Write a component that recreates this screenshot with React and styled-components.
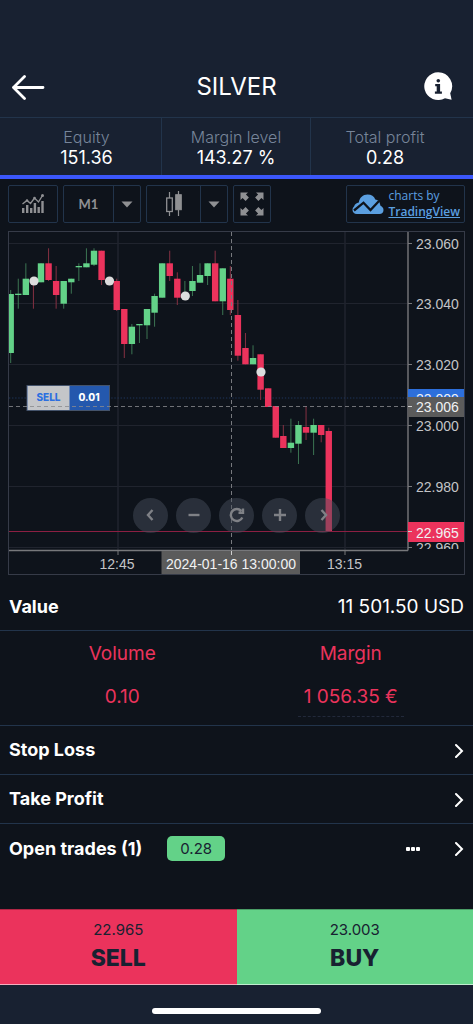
import React from "react";
import styled, { createGlobalStyle } from "styled-components";

const color = {
  page: "#0e131b",
  bar: "#182131",
  line: "#22344b",
  accent: "#3b57fb",
  up: "#63d288",
  down: "#eb335c",
  upWick: "#3c7553",
  downWick: "#863143",
  text: "#ffffff",
  muted: "#77859a",
  tool: "#8f9093",
  link: "#5b9fe0",
};

const GlobalStyle = createGlobalStyle`
  *, *::before, *::after { box-sizing: border-box; }
  body {
    margin: 0;
    background: ${color.page};
    color: ${color.text};
    font-family: Inter, "Liberation Sans", sans-serif;
  }
  button {
    margin: 0;
    padding: 0;
    border: 0;
    background: none;
    color: inherit;
    font: inherit;
    cursor: pointer;
  }
  svg { display: block; }
`;

const Page = styled.div`
  display: flex;
  flex-direction: column;
  min-height: 100vh;
`;

const Header = styled.header`
  display: grid;
  grid-template-columns: 1fr auto 1fr;
  align-items: center;
  padding: 56px 11px 0;
  height: 118px;
  background: ${color.bar};
  border-bottom: 1px solid ${color.line};
`;

const Title = styled.h1`
  margin: 0;
  font-size: 24px;
  line-height: 28px;
  font-weight: 400;
`;

const IconButton = styled.button`
  display: flex;
`;

const InfoButton = styled(IconButton)`
  justify-self: end;
  padding-right: 9px;
`;

const Stats = styled.dl`
  display: grid;
  grid-template-columns: repeat(3, 1fr);
  margin: 0;
  padding: 0 14px 0 12px;
  background: ${color.bar};
  border-bottom: 4px solid ${color.accent};
`;

const Stat = styled.div`
  display: flex;
  flex-direction: column;
  align-items: center;
  height: 57px;
  padding-top: 9px;
  & + & { border-left: 1px solid ${color.line}; }
`;

const StatLabel = styled.dt`
  font-size: 16px;
  line-height: 20px;
  font-weight: 300;
  color: ${color.muted};
`;

const StatValue = styled.dd`
  margin: 0;
  font-size: 18px;
  line-height: 22px;
`;

const Toolbar = styled.div`
  display: flex;
  gap: 5px;
  padding: 6px 8px 8px;
`;

const ToolGroup = styled.div`
  display: flex;
  height: 38px;
  border: 1px solid ${color.line};
  border-radius: 2px;
`;

const ToolButton = styled.button`
  display: flex;
  align-items: center;
  justify-content: center;
  width: ${(p) => p.$width}px;
  color: ${color.tool};
  font-family: Lato, sans-serif;
  font-size: 13px;
  font-weight: 700;
  & + & { border-left: 1px solid ${color.line}; }
`;

const Attribution = styled.a`
  display: flex;
  align-items: center;
  gap: 4px;
  height: 38px;
  margin-left: auto;
  padding: 0 4px 0 5px;
  border: 1px solid ${color.line};
  border-radius: 2px;
  color: ${color.link};
  font-family: "Open Sans", sans-serif;
  font-size: 12px;
  line-height: 16px;
  text-decoration: none;
`;

const AttributionText = styled.span`
  display: flex;
  flex-direction: column;
  strong {
    font-weight: 600;
    text-decoration: underline;
  }
`;

const ChartFrame = styled.section`
  position: relative;
  margin: 0 8px;
  border: 1px solid #363b48;
`;

const ChartSvg = styled.svg`
  width: 100%;
  height: auto;
  font-family: "Liberation Sans", Arial, sans-serif;
  font-size: 14px;
`;

const ChartNav = styled.div`
  position: absolute;
  left: 0;
  right: 0;
  bottom: 12%;
  display: flex;
  justify-content: center;
  gap: 8px;
`;

const NavButton = styled.button`
  display: flex;
  align-items: center;
  justify-content: center;
  width: 35px;
  height: 35px;
  border-radius: 50%;
  background: rgba(71, 79, 91, 0.48);
  color: #7f8186;
`;

const Row = styled.div`
  display: flex;
  align-items: center;
  min-height: 49px;
  padding: 0 9px;
  border-bottom: ${(p) => (p.$last ? "0" : `1px solid ${color.line}`)};
  font-size: 18px;
  line-height: 22px;
`;

const ValueRow = styled(Row)`
  min-height: 56px;
  padding-top: 8px;
`;

const RowLabel = styled.span`
  font-weight: 700;
`;

const RowValue = styled.span`
  margin-left: auto;
  font-size: 19px;
  font-weight: 400;
`;

const RowLink = styled.button`
  display: flex;
  flex: 1;
  align-items: center;
  justify-content: space-between;
  min-height: 48px;
  text-align: left;
`;

const Badge = styled.span`
  margin-left: 25px;
  padding: 0 13px;
  border-radius: 5px;
  background: ${color.up};
  color: ${color.bar};
  font-size: 15px;
  line-height: 25px;
`;

const RowActions = styled.div`
  display: flex;
  align-items: center;
  gap: 34px;
  margin-left: auto;
`;

const Amounts = styled.dl`
  display: grid;
  grid-template-columns: 1fr 1fr;
  margin: 0;
  padding: 0 8px;
  height: 95px;
  border-bottom: 1px solid ${color.line};
  color: ${color.down};
  font-size: 19px;
  line-height: 22px;
`;

const Amount = styled.div`
  display: flex;
  flex-direction: column;
  align-items: center;
  gap: 17px;
  padding-top: 12px;
`;

const AmountValue = styled.dd`
  margin: 0;
  padding: 4px 6px 8px;
  border-bottom: 1px dashed ${(p) => (p.$underlined ? "#22293a" : "transparent")};
`;

const OrderBar = styled.div`
  display: grid;
  grid-template-columns: 1fr 1fr;
  margin-top: auto;
`;

const OrderButton = styled.button`
  display: flex;
  flex-direction: column;
  align-items: center;
  height: 76px;
  padding-top: 10px;
  background: ${(p) => p.$fill};
  border-top: 1px solid rgba(0, 0, 0, 0.25);
  border-bottom: 1px solid rgba(255, 255, 255, 0.6);
  color: ${color.bar};
`;

const OrderPrice = styled.span`
  font-size: 15px;
  line-height: 20px;
`;

const OrderSide = styled.span`
  margin-top: 4px;
  font-size: 23px;
  line-height: 28px;
  font-weight: 800;
`;

const HomeArea = styled.footer`
  display: flex;
  justify-content: center;
  height: 39px;
  padding-top: 23px;
  background: ${color.bar};
`;

const HomeIndicator = styled.div`
  width: 169px;
  height: 6px;
  border-radius: 3px;
  background: #fff;
`;

const stats = [
  ["Equity", "151.36"],
  ["Margin level", "143.27 %"],
  ["Total profit", "0.28"],
];

// One entry per minute: [rising, body top, body bottom, wick top, wick bottom]
const candles = [
  [1, 294, 353, 290, 363],
  [1, 293.7, 295, 278.7, 308.7],
  [1, 278.7, 295, 263.3, 295],
  [0, 279, 283, 279, 308.7],
  [1, 263.3, 282.3, 263.3, 282.3],
  [0, 263.3, 280, 248.3, 281],
  [0, 281, 295, 266, 308.7],
  [1, 281, 303.7, 281, 308.7],
  [1, 278.7, 282.3, 278.7, 293.7],
  [1, 266, 267.3, 263.3, 281],
  [1, 263.3, 267.3, 248.3, 267.3],
  [1, 250.7, 264.7, 248.3, 266],
  [0, 250.7, 280, 250.7, 285],
  [0, 280, 282, 279, 284],
  [0, 281, 310, 278.7, 311],
  [0, 309, 344, 309, 358],
  [1, 326.7, 344, 324, 354.3],
  [1, 324, 325.3, 324, 343],
  [1, 309, 325.3, 309, 339],
  [1, 296, 312.7, 293.7, 326.7],
  [1, 263.3, 297.7, 263.3, 297.7],
  [0, 263.3, 276, 250.7, 281],
  [0, 278.7, 297.7, 272.3, 305],
  [1, 294, 297, 281, 298],
  [1, 281, 291, 266, 296],
  [1, 275, 282.7, 263.3, 282.7],
  [1, 263.3, 276, 263.3, 285],
  [0, 263.3, 301.3, 250.7, 301.3],
  [1, 268.3, 301.3, 268.3, 315],
  [0, 278.7, 310, 266, 315],
  [0, 315, 355.7, 300, 360.7],
  [0, 348, 364.3, 333, 364.3],
  [1, 358, 364.3, 345.3, 364.3],
  [0, 354.3, 389.7, 354.3, 400],
  [0, 388.3, 407, 388.3, 407],
  [0, 406, 437.7, 406, 437.7],
  [0, 436, 448, 425, 448],
  [1, 442.7, 448, 418.7, 452.7],
  [1, 425, 443.7, 421, 464],
  [0, 427, 432.7, 406, 440],
  [1, 425, 432.7, 418.7, 455],
  [0, 425, 435, 425, 442.3],
  [0, 431, 532, 427.7, 532],
];

const priceLines = [
  [243.5, "23.060"],
  [303.5, "23.040"],
  [364.5, "23.020"],
  [425.5, "23.000"],
  [486.5, "22.980"],
];

const markers = [
  [34, 281],
  [109.5, 281],
  [185.3, 296],
  [261, 372],
];

function Candle({ index, data }) {
  const [rising, top, bottom, high, low] = data;
  const x = 10.7 + index * 7.573;
  return (
    <g>
      <line x1={x} x2={x} y1={high} y2={low} stroke={rising ? color.upWick : color.downWick} />
      <rect x={x - 3.2} y={top} width="6.4" height={bottom - top} fill={rising ? color.up : color.down} />
    </g>
  );
}

function PriceChart() {
  return (
    <ChartSvg viewBox="9 232 455 342" role="img" aria-label="SILVER one minute candles">
      <defs>
        <clipPath id="plot"><rect x="9" y="232" width="399" height="318" /></clipPath>
        <clipPath id="scale"><rect x="408" y="232" width="56" height="317" /></clipPath>
        <clipPath id="order-tag"><rect x="408" y="389" width="56" height="8" /></clipPath>
      </defs>
      <g stroke="#20242e" strokeWidth="1">
        {priceLines.map(([y]) => <line key={y} x1="9" x2="407" y1={y} y2={y} />)}
        <line x1="9" x2="407" y1="547.5" y2="547.5" />
        <line x1="118" x2="118" y1="232" y2="550" strokeWidth="1.6" />
        <line x1="345" x2="345" y1="232" y2="550" strokeWidth="1.6" />
      </g>
      <line x1="9" x2="408" y1="398" y2="398" stroke="#1e355c" strokeDasharray="1.3 1.8" />
      <g clipPath="url(#plot)">
        {candles.map((c, i) => <Candle key={i} index={i} data={c} />)}
      </g>
      {markers.map(([x, y]) => <circle key={x} cx={x} cy={y} r="4.6" fill="#dcdcdd" />)}
      <line x1="9" x2="408" y1="531.5" y2="531.5" stroke="#8c1f42" />

      <rect x="27" y="385.5" width="82.5" height="25" fill="#2458ad" stroke="#44536b" />
      <rect x="27.5" y="386" width="42" height="24" fill="#c4c6c9" />
      <g fontFamily="Inter, sans-serif" fontSize="10" fontWeight="800" textAnchor="middle">
        <text x="48.5" y="401" fill="#2c6fe0">SELL</text>
        <text x="89" y="401" fill="#fff">0.01</text>
      </g>
      <line x1="9" x2="408" y1="406.5" y2="406.5" stroke="#8a8b8e" strokeOpacity=".8" strokeDasharray="4 3" />
      <line x1="231.5" x2="231.5" y1="232" y2="550" stroke="#77797e" strokeDasharray="4 3" />

      <path d="M408 232V550.5M9 550.5H408" fill="none" stroke="#77787b" strokeWidth="1.4" />
      <path d="M408 243.5h4M408 303.5h4M408 364.5h4M408 425.5h4M408 486.5h4M408 547.5h4M118 551v4M345 551v4" stroke="#77787b" />
      <g fill="#c3c4c7">
        {priceLines.map(([y, label]) => <text key={y} x="416" y={y + 5.5}>{label}</text>)}
        <text x="416" y="553" clipPath="url(#scale)">22.960</text>
        <text x="117" y="569" textAnchor="middle">12:45</text>
        <text x="344.5" y="569" textAnchor="middle">13:15</text>
      </g>
      <g fill="#f1f2f3">
        <g clipPath="url(#order-tag)">
          <rect x="408" y="389" width="56" height="20" fill="#2d6fdb" />
          <text x="416" y="404">23.009</text>
        </g>
        <rect x="408" y="397" width="56" height="20" fill="#5b5b5b" />
        <text x="416" y="412">23.006</text>
        <rect x="408" y="522" width="56" height="20" fill={color.down} />
        <text x="416" y="537.5">22.965</text>
        <path d="M408 406.5h4M408 531.5h4" stroke="#d0d0d0" />
        <rect x="161.5" y="551" width="138.5" height="23" fill="#5b5b5b" />
        <text x="231" y="569" textAnchor="middle">2024-01-16 13:00:00</text>
        <path d="M231.5 551v4" stroke="#d0d0d0" />
      </g>
    </ChartSvg>
  );
}

const BackIcon = () => (
  <svg width="34" height="26" viewBox="0 0 34 26" fill="none" stroke="#fff" strokeWidth="2.8" strokeLinecap="round" strokeLinejoin="round">
    <path d="M32 13.500H2.500M13.500 2.500 2.500 13.500l11 11" />
  </svg>
);

const InfoIcon = () => (
  <svg width="29" height="29" viewBox="0 0 29 29">
    <path fill="#fff" d="M14.2.3a13.9 13.9 0 1 0 6.8 26l6.6 1.4-1.4-6.5A13.9 13.9 0 0 0 14.2.3Z" />
    <circle cx="14.3" cy="8.7" r="1.8" fill={color.bar} />
    <path fill={color.bar} d="M11.2 12h4.900v7.400h1.800v2.300h-7v-2.300h1.800v-5.100h-1.500z" />
  </svg>
);

const IndicatorsIcon = () => (
  <svg width="24" height="22" viewBox="0 0 24 22">
    <path fill="currentColor" d="M1 15h2.400v5H1zM5 12h2.400v8H5zM9 15h2.400v5H9zM12.700 10h2.400v10h-2.400zM16.500 14h2.400v6h-2.400zM20.300 8h2.400v12h-2.400z" />
    <path d="M1.500 11 6 7.500l3.500 3L13.500 5l4 4 4-6.500" fill="none" stroke="currentColor" strokeWidth="1.400" />
    <circle cx="21.500" cy="2.500" r="1.500" fill="currentColor" />
    <circle cx="13.500" cy="5" r="1.300" fill="currentColor" />
    <circle cx="6" cy="7.500" r="1.200" fill="currentColor" />
  </svg>
);

const CaretIcon = () => (
  <svg width="12" height="7" viewBox="0 0 12 7"><path d="M.5.500h11L6 6.500z" fill="currentColor" /></svg>
);

const CandlesIcon = () => (
  <svg width="18" height="26" viewBox="0 0 18 26" stroke="currentColor">
    <path d="M4.500 1v6M4.500 21v4M13.500 0v4M13.500 19v6" strokeWidth="1.200" />
    <rect x="1.700" y="7" width="5.600" height="13.500" fill="none" strokeWidth="1.300" />
    <rect x="10.700" y="3.700" width="5.600" height="15" fill="currentColor" />
  </svg>
);

const ExpandIcon = () => (
  <svg width="24" height="24" viewBox="0 0 24 24" fill="currentColor">
    <path id="corner" d="M.5.5h7.500L5.900 2.600l3 3-3.300 3.300-3-3L.5 8z" />
    <use href="#corner" transform="matrix(-1 0 0 1 24 0)" />
    <use href="#corner" transform="matrix(1 0 0 -1 0 24)" />
    <use href="#corner" transform="matrix(-1 0 0 -1 24 24)" />
  </svg>
);

const CloudIcon = () => (
  <svg width="32" height="20" viewBox="0 0 32 20">
    <path fill={color.link} d="M2 12.500C3 10 4.500 9 6.800 8.600 7.500 3.500 11 .500 15.500.500c4 0 6.500 1.800 7.800 5 2.500.2 4.200 1.800 4.700 4.500l.5 1.700c1.800.8 3 2.300 3 4.200 0 2.400-1.600 4.100-4 4.100H4.800C2.200 20 .500 18.300.500 16c0-1.400.5-2.600 1.500-3.500Z" />
    <path d="m2 16.500 9.500-7.800 7 7.300 8.500-9" fill="none" stroke={color.page} strokeWidth="2.300" />
  </svg>
);

const ChevronIcon = () => (
  <svg width="10" height="15" viewBox="0 0 10 15" fill="none" stroke="#fff" strokeWidth="2" strokeLinecap="round">
    <path d="m2 2 6 6-6 6" />
  </svg>
);

const MoreIcon = () => (
  <svg width="14" height="4" viewBox="0 0 14 4" fill="#fff">
    <rect width="4" height="4" rx="1" /><rect x="5" width="4" height="4" rx="1" /><rect x="10" width="4" height="4" rx="1" />
  </svg>
);

const navGlyphs = [
  ["Scroll left", "M9.500 3 5 8l4.500 5"],
  ["Zoom out", "M2.500 8h11"],
  ["Reset", "M13.300 10.500a6 6 0 1 1-1-6.500M14 1.500v4.300H9.500"],
  ["Zoom in", "M2 8h12M8 2v12"],
  ["Scroll right", "M6.500 3 11 8l-4.500 5"],
];

export default function App() {
  return (
    <Page>
      <GlobalStyle />
      <Header>
        <IconButton aria-label="Back"><BackIcon /></IconButton>
        <Title>SILVER</Title>
        <InfoButton aria-label="Information"><InfoIcon /></InfoButton>
      </Header>
      <Stats>
        {stats.map(([label, value]) => (
          <Stat key={label}>
            <StatLabel>{label}</StatLabel>
            <StatValue>{value}</StatValue>
          </Stat>
        ))}
      </Stats>

      <Toolbar>
        <ToolGroup><ToolButton $width={48} aria-label="Indicators"><IndicatorsIcon /></ToolButton></ToolGroup>
        <ToolGroup>
          <ToolButton $width={49}>M1</ToolButton>
          <ToolButton $width={27} aria-label="Choose interval"><CaretIcon /></ToolButton>
        </ToolGroup>
        <ToolGroup>
          <ToolButton $width={53} aria-label="Candles"><CandlesIcon /></ToolButton>
          <ToolButton $width={27} aria-label="Choose chart type"><CaretIcon /></ToolButton>
        </ToolGroup>
        <ToolGroup><ToolButton $width={36} aria-label="Full screen"><ExpandIcon /></ToolButton></ToolGroup>
        <Attribution href="#tradingview">
          <CloudIcon />
          <AttributionText>charts by<strong>TradingView</strong></AttributionText>
        </Attribution>
      </Toolbar>

      <ChartFrame>
        <PriceChart />
        <ChartNav>
          {navGlyphs.map(([label, d]) => (
            <NavButton key={label} aria-label={label}>
              <svg width="16" height="16" viewBox="0 0 16 16" fill="none" stroke="currentColor" strokeWidth="2.400"><path d={d} /></svg>
            </NavButton>
          ))}
        </ChartNav>
      </ChartFrame>

      <ValueRow>
        <RowLabel>Value</RowLabel>
        <RowValue>11 501.50 USD</RowValue>
      </ValueRow>
      <Amounts>
        <Amount><dt>Volume</dt><AmountValue>0.10</AmountValue></Amount>
        <Amount><dt>Margin</dt><AmountValue $underlined>1 056.35 €</AmountValue></Amount>
      </Amounts>
      <Row><RowLink><RowLabel>Stop Loss</RowLabel><ChevronIcon /></RowLink></Row>
      <Row><RowLink><RowLabel>Take Profit</RowLabel><ChevronIcon /></RowLink></Row>
      <Row $last>
        <RowLabel>Open trades (1)</RowLabel>
        <Badge>0.28</Badge>
        <RowActions>
          <IconButton aria-label="More"><MoreIcon /></IconButton>
          <IconButton aria-label="Show open trades"><ChevronIcon /></IconButton>
        </RowActions>
      </Row>

      <OrderBar>
        <OrderButton $fill={color.down}><OrderPrice>22.965</OrderPrice><OrderSide>SELL</OrderSide></OrderButton>
        <OrderButton $fill={color.up}><OrderPrice>23.003</OrderPrice><OrderSide>BUY</OrderSide></OrderButton>
      </OrderBar>
      <HomeArea><HomeIndicator /></HomeArea>
    </Page>
  );
}
